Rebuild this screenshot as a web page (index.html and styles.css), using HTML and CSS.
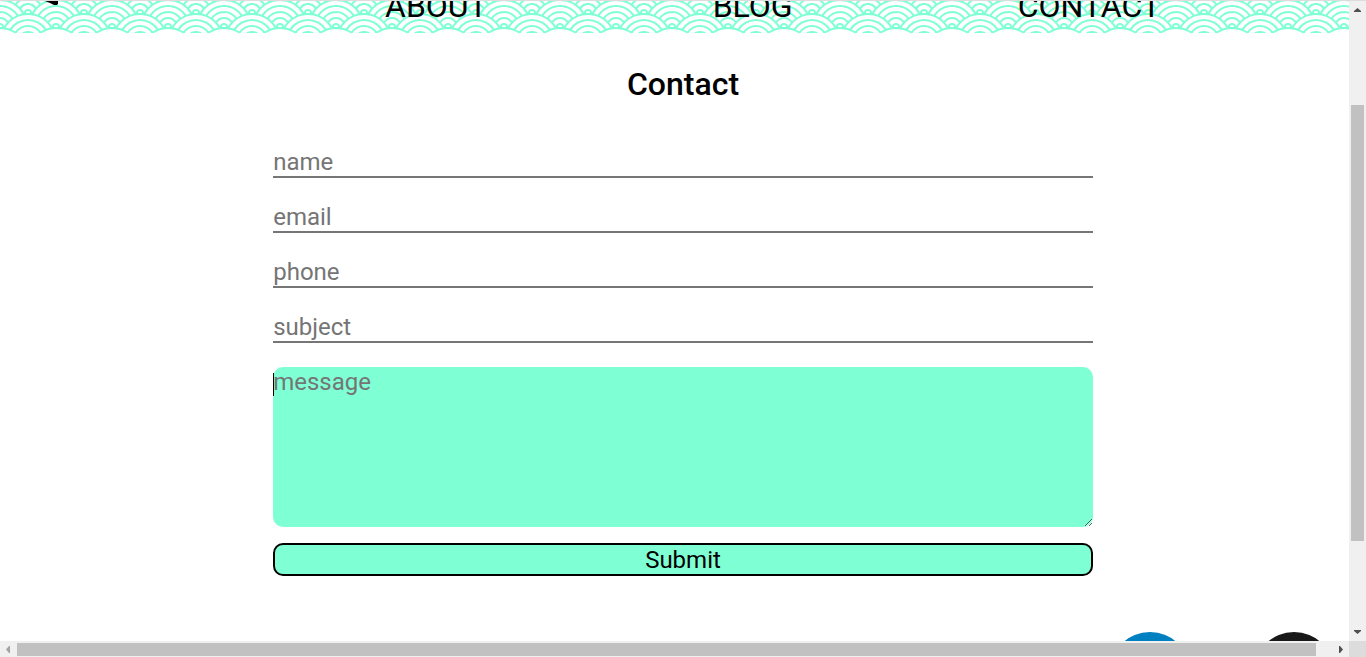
FILE: index.html
```html
<!DOCTYPE html>
<html lang="en">
<head>
<meta charset="utf-8">
<title>Contact</title>
<link rel="stylesheet" href="styles.css">
</head>
<body>
<div class="frame">
  <div class="viewport">
    <div class="page">
      <header class="header">
        <svg class="logo" width="14" height="5" viewBox="0 0 14 5" aria-hidden="true"><path d="M0 0H13V3L12 4H9L5 2Z"/></svg>
        <nav class="nav">
          <a href="#about">ABOUT</a>
          <a href="#blog">BLOG</a>
          <a href="#contact">CONTACT</a>
        </nav>
      </header>
      <main class="main" id="contact">
        <h1 class="title">Contact</h1>
        <form class="form">
          <input class="field" type="text" name="name" placeholder="name" aria-label="name">
          <input class="field" type="email" name="email" placeholder="email" aria-label="email">
          <input class="field" type="tel" name="phone" placeholder="phone" aria-label="phone">
          <input class="field" type="text" name="subject" placeholder="subject" aria-label="subject">
          <div class="message-box">
            <textarea class="message" name="message" placeholder="message" aria-label="message"></textarea>
            <span class="caret"></span>
          </div>
          <button class="submit" type="submit">Submit</button>
        </form>
      </main>
      <footer class="social">
        <a class="badge badge-blue" href="#linkedin" aria-label="LinkedIn"></a>
        <a class="badge badge-black" href="#github" aria-label="GitHub"></a>
      </footer>
    </div>
  </div>
  <div class="bar bar-y" aria-hidden="true">
    <svg width="17" height="17" viewBox="0 0 17 17"><path fill="#505050" d="M5 11h7v-1L8.500 7 5 10z"/></svg>
    <div class="track-y"><div class="thumb-y"></div></div>
    <svg width="17" height="17" viewBox="0 0 17 17"><path fill="#505050" d="M5 6h7v1L8.500 10 5 7z"/></svg>
  </div>
  <div class="bar bar-x" aria-hidden="true">
    <svg width="17" height="16" viewBox="0 0 17 16"><path fill="#a3a3a3" d="M10 5v7H9L6 8.500 9 5z"/></svg>
    <div class="thumb-x"></div>
    <svg class="arrow-right" width="17" height="16" viewBox="0 0 17 16"><path fill="#505050" d="M7 5v7h1l3-3.500L8 5z"/></svg>
  </div>
  <div class="corner"></div>
</div>
</body>
</html>
```
FILE: styles.css
```css
* { box-sizing: border-box; }

body {
  margin: 0;
  font-family: Roboto, "Liberation Sans", sans-serif;
  color: #000;
  background: #fff;
}

.frame {
  display: grid;
  grid-template-columns: minmax(0, 1fr) 17px;
  grid-template-rows: minmax(0, 1fr) 16px;
  height: 100vh;
}

.viewport {
  overflow: hidden;
  border-top: 1px solid #dcdcdc;
}

.page { width: 100vw; }

.header {
  display: flex;
  align-items: flex-start;
  height: 32px;
  padding-left: 45px;
  overflow: hidden;
  background-position: 0 12px;
  background-image: url("data:image/svg+xml,%3Csvg xmlns='http://www.w3.org/2000/svg' width='56' height='28' viewBox='0 0 56 28'%3E%3Cpath fill='%237fffd4' d='M56 26v2h-7.75c2.3-1.27 4.94-2 7.75-2zm-26 2a2 2 0 1 0-4 0h-4.09A25.98 25.98 0 0 0 0 16v-2c.67 0 1.34.02 2 .07V14a2 2 0 0 0-2-2v-2a4 4 0 0 1 3.98 3.6 28.09 28.09 0 0 1 2.8-3.86A8 8 0 0 0 0 6V4a9.99 9.99 0 0 1 8.17 4.23c.94-.95 1.96-1.83 3.03-2.63A13.98 13.98 0 0 0 0 0h7.75c2 1.1 3.73 2.63 5.1 4.45 1.12-.72 2.3-1.37 3.53-1.93A20.1 20.1 0 0 0 14.28 0h2.7c.45.56.88 1.14 1.29 1.74 1.3-.48 2.63-.87 4-1.15-.11-.2-.23-.4-.36-.59H26v.07a28.4 28.4 0 0 1 4 0V0h4.09l-.37.59c1.38.28 2.72.67 4.01 1.15.4-.6.84-1.18 1.3-1.74h2.69a20.1 20.1 0 0 0-2.1 2.52c1.23.56 2.41 1.2 3.54 1.93A16.08 16.08 0 0 1 48.25 0H56c-4.58 0-8.65 2.2-11.2 5.6 1.07.8 2.09 1.68 3.03 2.63A9.99 9.99 0 0 1 56 4v2a8 8 0 0 0-6.77 3.74c1.03 1.2 1.97 2.5 2.79 3.86A4 4 0 0 1 56 10v2a2 2 0 0 0-2 2.07 28.4 28.4 0 0 1 2-.07v2c-9.2 0-17.3 4.78-21.91 12H30zM7.75 28H0v-2c2.81 0 5.46.73 7.75 2zM56 20v2c-5.6 0-10.65 2.3-14.28 6h-2.7c4.04-4.89 10.15-8 16.98-8zm-39.03 8h-2.69C10.65 24.3 5.6 22 0 22v-2c6.83 0 12.94 3.11 16.97 8zm15.01-.4a28.09 28.09 0 0 1 2.8-3.86 8 8 0 0 0-13.55 0c1.03 1.2 1.97 2.5 2.79 3.86a4 4 0 0 1 7.96 0zm14.29-11.86c1.3-.48 2.63-.87 4-1.15a25.99 25.99 0 0 0-44.55 0c1.38.28 2.72.67 4.01 1.15a21.98 21.98 0 0 1 36.52 0zm-5.43 2.71c1.13-.72 2.3-1.37 3.54-1.93a19.98 19.98 0 0 0-32.69 0c1.23.56 2.41 1.2 3.54 1.93a15.98 15.98 0 0 1 25.62 0zm-4.67 3.78c.94-.95 1.96-1.83 3.03-2.63a13.98 13.98 0 0 0-22.4 0c1.07.8 2.09 1.68 3.03 2.63a9.99 9.99 0 0 1 16.34 0z'/%3E%3C/svg%3E");
}

.logo { flex: none; }

.nav {
  display: flex;
  gap: 225px;
  margin-top: -14px;
  padding-left: 326px;
  font-size: 32px;
  line-height: 38px;
}

.nav a {
  color: #000;
  text-decoration: none;
}

.main {
  display: flex;
  flex-direction: column;
  align-items: center;
}

.title {
  margin: 32px 0;
  font-size: 32px;
  font-weight: 500;
  line-height: 38px;
}

.form {
  display: flex;
  flex-direction: column;
  width: 60%;
  padding-top: 12px;
}

.field {
  width: 100%;
  height: 31px;
  margin: 0 0 24px;
  padding: 1px 0 0;
  border: 0;
  border-bottom: 2px solid #767676;
  background: transparent;
  font-family: inherit;
  font-size: 24px;
  line-height: 28px;
  outline: none;
}

.message-box {
  position: relative;
  display: flex;
}

.message {
  width: 100%;
  height: 160px;
  margin: 0;
  padding: 1px 0;
  border: 0;
  border-radius: 10px;
  background: #7fffd4;
  font-family: inherit;
  font-size: 24px;
  line-height: 28px;
  outline: none;
}

.field::placeholder,
.message::placeholder { color: #757575; }

.caret {
  position: absolute;
  top: 6px;
  left: 0;
  width: 1px;
  height: 23px;
  background: #000;
}

.submit {
  margin-top: 16px;
  padding: 0;
  height: 33px;
  border: 2px solid #000;
  border-radius: 10px;
  background: #7fffd4;
  color: #000;
  font-family: inherit;
  font-size: 24px;
  line-height: 28px;
}

.social {
  display: flex;
  justify-content: flex-end;
  gap: 64px;
  padding: 56px 32px 0 0;
}

.badge {
  width: 80px;
  height: 80px;
  border-radius: 50%;
}

.badge-blue { background: #0080c0; }
.badge-black { background: #181818; }

.bar {
  display: flex;
  background: #f0f0f0;
}

.bar svg { flex: none; }

.bar-y {
  flex-direction: column;
  border-top: 1px solid #dcdcdc;
}

.track-y {
  flex: 1;
  padding: 0 2px;
}

.thumb-y {
  height: 72%;
  margin-top: 87px;
  background: #c1c1c1;
}

.thumb-x {
  flex: 1;
  margin: 2px 16px 1px 0;
  background: #c1c1c1;
}

.corner { background: #dcdcdc; }
```
